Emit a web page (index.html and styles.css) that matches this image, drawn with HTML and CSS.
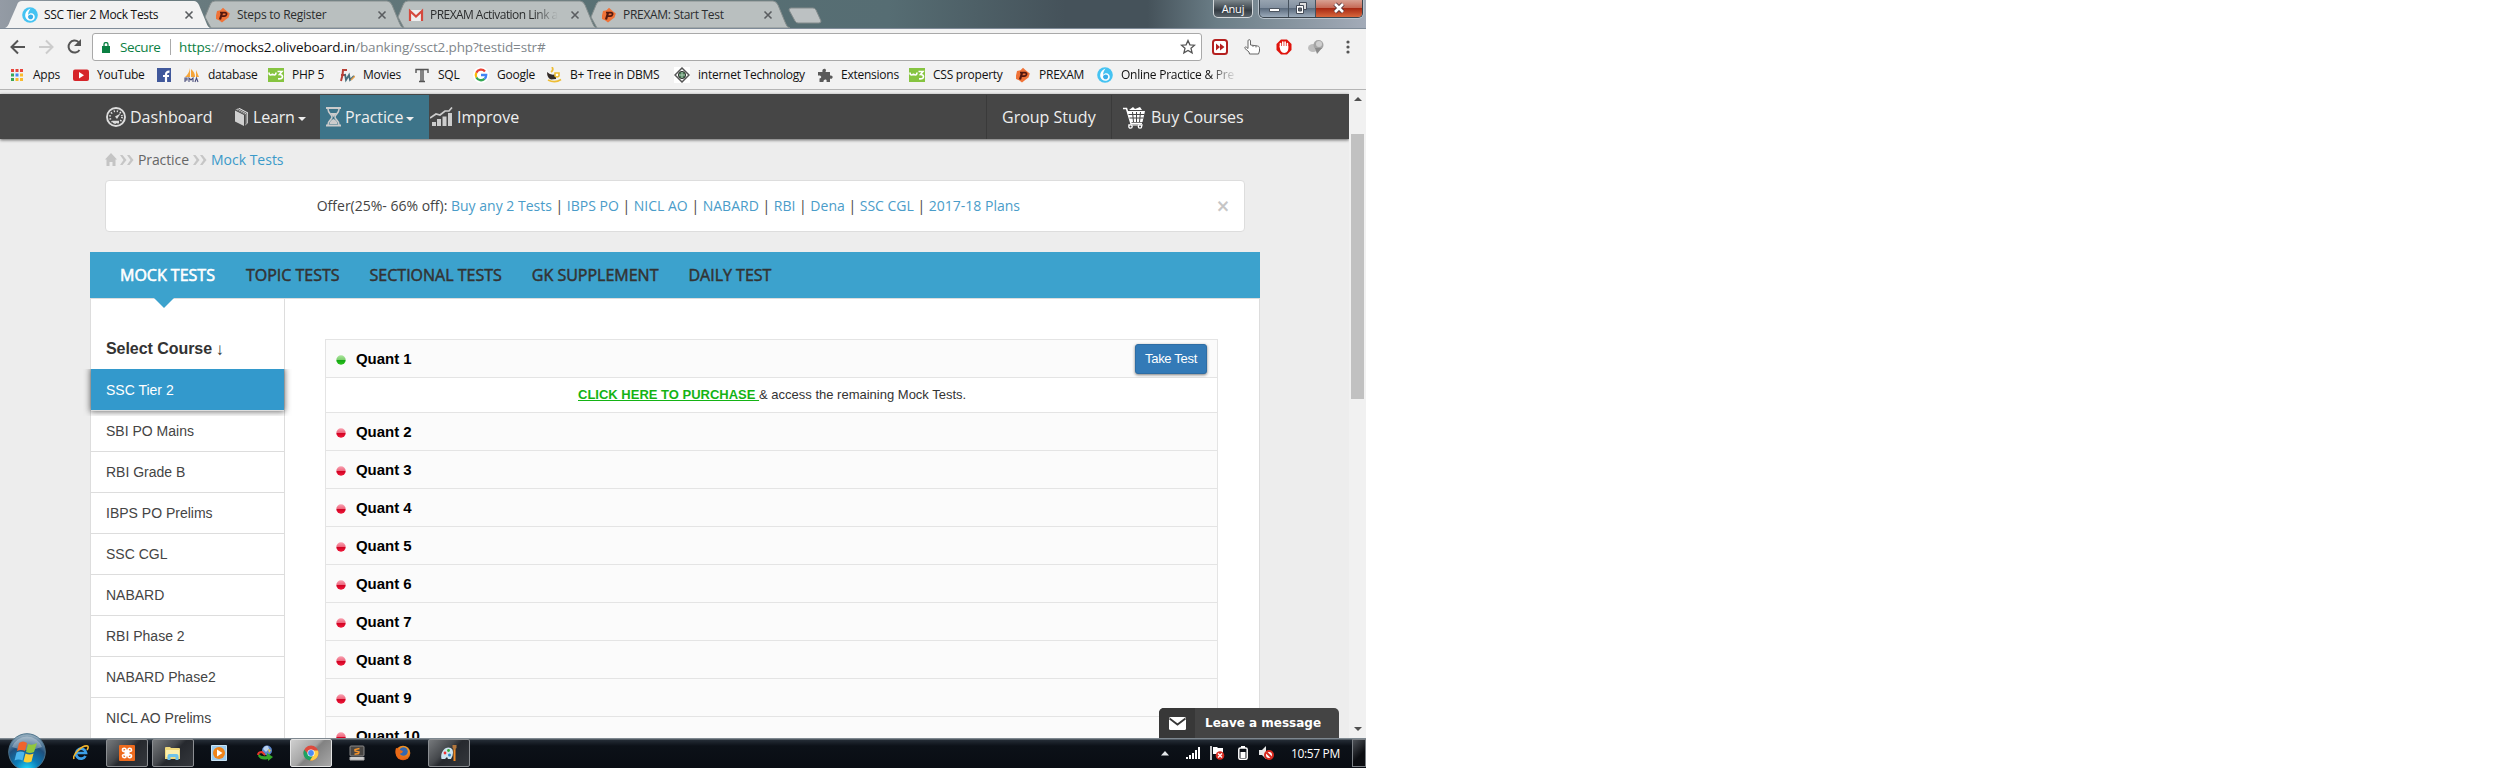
FILE: index.html
```html
<!DOCTYPE html>
<html lang="en">
<head>
<meta charset="utf-8">
<title>SSC Tier 2 Mock Tests</title>
<link rel="stylesheet" href="styles.css">
</head>
<body>
<svg class="defs" width="0" height="0">
  <defs>
    <linearGradient id="gGreen" x1="0" y1="0" x2="0" y2="1"><stop offset="0" stop-color="#a9e69c"/><stop offset=".45" stop-color="#7fd070"/><stop offset=".5" stop-color="#14a414"/><stop offset="1" stop-color="#2cc41c"/></linearGradient>
    <linearGradient id="gRed" x1="0" y1="0" x2="0" y2="1"><stop offset="0" stop-color="#f9a0b0"/><stop offset=".45" stop-color="#ee6a80"/><stop offset=".5" stop-color="#cf0020"/><stop offset="1" stop-color="#f01a3c"/></linearGradient>
    <radialGradient id="gOrb" cx=".5" cy="1" r=".95"><stop offset="0" stop-color="#25e0ff"/><stop offset=".35" stop-color="#0b7cb8"/><stop offset=".7" stop-color="#1f4f7c"/><stop offset="1" stop-color="#8fa9bb"/></radialGradient>
    <radialGradient id="gFox" cx=".6" cy=".3" r=".8"><stop offset="0" stop-color="#ffb52a"/><stop offset="1" stop-color="#d8480c"/></radialGradient>
  </defs>
  <symbol id="olive" viewBox="0 0 16 16"><circle cx="8" cy="8" r="7.800" fill="#45c3f2"/><path d="M8.500 1.500C4.500 3 2.600 6.500 3.400 10c.8 3 4 4.300 6.800 3.400 2.600-1 3.400-4 1.600-6-1.600-1.600-4.200-1.300-5.700.6C6 5.500 7.200 3.500 8.500 1.500z" fill="#fff"/><path d="M6 9.500c.5-2 3-2.800 4.500-1.400 1.300 1.400.6 3.500-1 4.100C7.700 12.800 6 11.500 6 9.500z" fill="#3aaee8"/></symbol>
  <symbol id="prexam" viewBox="0 0 16 16"><path d="M8 .8l3 2.700 3.800 3-1.300 4-3 2.200L7 15.500l-3-2.200L1 12V8.500L2 4l3.500-.7z" fill="#f07338"/><path d="M5 12.500L7 6" fill="none" stroke="#54190f" stroke-width="2.200"/><path d="M5 5.600h5.200q1.800.4 1.300 2t-2.300 1.600H6.500" fill="none" stroke="#54190f" stroke-width="1.700"/></symbol>
  <symbol id="w3" viewBox="0 0 16 16"><path d="M0 1h16v14H0z" fill="#86c440"/><path d="M1 5.500q0 2.500 1.700 2.500T4.500 6.500Q4.700 8 6.300 8T8 5.500M9.500 4.500h4.500l-2.500 3q3 0 3 2.300t-4.500 2" fill="none" stroke="#fff" stroke-width="1.600"/></symbol>
  <symbol id="x" viewBox="0 0 10 10"><path d="M1.500 1.500l7 7m0-7l-7 7" stroke="#5a5d60" stroke-width="1.600"/></symbol>
  <symbol id="chev" viewBox="0 0 14 10"><path d="M0 0h2.500l4 5-4 5H0l3.500-5zM7 0h2.500l4 5-4 5H7l3.500-5z" fill="#c6c6c6"/></symbol>
</svg>
<div class="screen">
  <header class="titlebar">
    <div class="tabs">
      <div class="tab tab-on"><svg class="shape" viewBox="0 0 206 28"><path d="M0 28Q3 27 5 21L12 5Q13 1 17 1H189Q192 1 194 5L201 22Q203 28 206 28z" fill="#f2f2f2"/></svg><svg class="fav"><use href="#olive"/></svg><span class="t1">SSC Tier 2 Mock Tests</span><svg class="close"><use href="#x"/></svg></div>
      <div class="tab"><svg class="shape" viewBox="0 0 206 28"><path d="M7 17L12 5Q13 1 17 1H189Q192 1 194 5L201 22Q203 28 206 28H13z" fill="#b9bfbf" stroke="#868e8e"/></svg><svg class="fav"><use href="#prexam"/></svg><span class="t2">Steps to Register</span><svg class="close"><use href="#x"/></svg></div>
      <div class="tab"><svg class="shape" viewBox="0 0 206 28"><path d="M7 17L12 5Q13 1 17 1H189Q192 1 194 5L201 22Q203 28 206 28H13z" fill="#b9bfbf" stroke="#868e8e"/></svg><svg class="fav" viewBox="0 0 16 16"><path d="M1 3h14v11H1z" fill="#eee"/><path d="M2 14V4l6 5.500L14 4v10" fill="none" stroke="#d5493d" stroke-width="2.200"/></svg><span class="t3">PREXAM Activation Link a</span><svg class="close"><use href="#x"/></svg></div>
      <div class="tab"><svg class="shape" viewBox="0 0 206 28"><path d="M7 17L12 5Q13 1 17 1H189Q192 1 194 5L201 22Q203 28 206 28H13z" fill="#b9bfbf" stroke="#868e8e"/></svg><svg class="fav"><use href="#prexam"/></svg><span class="t4">PREXAM: Start Test</span><svg class="close"><use href="#x"/></svg></div>
    </div>
    <svg class="newtab" viewBox="0 0 34 17"><path d="M3 1H25Q27 1 28 3L33 14Q33 16 31 16H10Q8 16 7 14L1 3Q1 1 3 1z" fill="#bcc1c2" stroke="#838b8c"/></svg>
    <div class="user">Anuj</div>
    <div class="winctl">
      <div class="wc wmin"><svg viewBox="0 0 28 18"><path d="M9.500 8.500h10v3h-10z" fill="#fff" stroke="#4c5560"/></svg></div>
      <div class="wc wmax"><svg viewBox="0 0 26 18"><path d="M10.500 2.500h7v7h-7z" fill="#ddd" stroke="#444c58"/><path d="M7.500 5.500h7v8h-7z" fill="#fff" stroke="#444c58"/><path d="M9.500 8h3v3h-3z" fill="#666" stroke="#444c58"/></svg></div>
      <div class="wc wcls"><svg viewBox="0 0 46 18"><path d="M19 4l8 8m0-8l-8 8" stroke="#54343a" stroke-width="4.500"/><path d="M19 4l8 8m0-8l-8 8" stroke="#fff" stroke-width="2.600"/></svg></div>
    </div>
  </header>
  <div class="toolbar">
    <svg class="navbtns" viewBox="0 0 92 32"><g fill="none" stroke-width="2"><path d="M25 18H12m6-6.500L11.500 18l6.500 6.500" stroke="#555"/><path d="M39 18h13m-6-6.500l6.500 6.500-6.500 6.500" stroke="#ccc"/><path d="M79.500 21a6 6 0 1 1-1-8" stroke="#555"/></g><path d="M81 10v7h-7z" fill="#555"/></svg>
    <div class="omnibox">
      <svg class="lock" viewBox="0 0 8 11"><path d="M0 4h8v7H0z" fill="#0b8043"/><path d="M2 5V2.500a2 2 0 0 1 4 0V5" fill="none" stroke="#0b8043" stroke-width="1.300"/></svg>
      <span class="secure">Secure</span><i class="vsep"></i><span class="url"><b>https</b>://<em>mocks2.oliveboard.in</em>/banking/ssct2.php?testid=str#</span>
      <svg class="star" viewBox="0 0 16 16"><path d="M8 1.500l1.900 4.300 4.700.4-3.600 3.100 1.100 4.600L8 11.500l-4.100 2.400L5 9.300 1.400 6.200l4.700-.4z" fill="none" stroke="#555" stroke-width="1.300"/></svg>
    </div>
    <div class="exts">
      <svg viewBox="0 0 16 16"><rect x="1" y="1" width="14" height="14" rx="2.500" fill="#fff" stroke="#b5201f" stroke-width="2"/><path d="M4 4.500L8 8l-4 3.500zM8 4.500L12.500 8 8 11.500z" fill="#b5201f"/></svg>
      <svg viewBox="0 0 16 16"><path d="M5.500 15L5 13 1 9.500c-1-1.500.8-2 1.800-1l1.200 1V1.800C4 .3 6.500.3 6.500 1.800V6l7 1c1.500.3 2 1 2 2.500V12l-1 3z" fill="#fff" stroke="#666"/><path d="M9 6v2m3-1.500v2" stroke="#777"/></svg>
      <svg viewBox="0 0 16 16"><path d="M5 .5h6L15.500 5v6L11 15.500H5L.5 11V5z" fill="#e0140c"/><path d="M4.500 8V4.500m2.300 4V3m2.300 5.500V3m2.300 5V4.500" stroke="#fff" stroke-width="1.600" stroke-linecap="round"/><path d="M3.700 7h8.500c.8 4-1 7-4 7s-4.500-3-4.500-7z" fill="#fff"/></svg>
      <svg viewBox="0 0 16 16"><ellipse cx="5" cy="9" rx="5" ry="4" fill="#bdbdbd"/><circle cx="10.500" cy="6" r="5" fill="#a4a4a4"/><path d="M7 9l2 6 5-6z" fill="#8a8a8a"/><circle cx="11" cy="5" r="3" fill="#cfcfcf"/></svg>
      <svg viewBox="0 0 16 16" fill="#555"><circle cx="8" cy="3" r="1.600"/><circle cx="8" cy="8" r="1.600"/><circle cx="8" cy="13" r="1.600"/></svg>
    </div>
  </div>
  <div class="bookmarks">
    <div class="bm b0"><svg viewBox="0 0 16 16"><path d="M2 2h3v3H2zM6.500 2h3v3h-3zM11 2h3v3h-3z" fill="#e8453c"/><path d="M2 6.500h3v3H2z" fill="#3aa757"/><path d="M6.500 6.500h3v3h-3z" fill="#4688f1"/><path d="M11 6.500h3v3h-3zM6.500 11h3v3h-3zM11 11h3v3h-3z" fill="#f9bb2d"/><path d="M2 11h3v3H2z" fill="#3aa757"/></svg><span>Apps</span></div>
    <div class="bm b1"><svg viewBox="0 0 16 16"><rect y="2.500" width="16" height="11.500" rx="2" fill="#d6252a"/><path d="M6 5l5 3.200-5 3.200z" fill="#fff"/></svg><span>YouTube</span></div>
    <div class="bm b2"><svg viewBox="0 0 16 16"><path d="M1 1h14v14H1z" fill="#40589b"/><path d="M10 15V7.500Q10 4.500 13.500 4.700M7 9h6" fill="none" stroke="#fff" stroke-width="2.200"/></svg></div>
    <div class="bm b3"><svg viewBox="0 0 16 16"><path d="M1 10Q5 7 6 1v9zM7 10V2q4 3 4 8zM12 10V3l3 7z" fill="#f5a53a"/><path d="M1 15v-4h2v2H1m4 2v-4l2 2 2-2v4m2 0l1.500-4L14 15" fill="none" stroke="#4a4d7c" stroke-width="1.100"/></svg><span>database</span></div>
    <div class="bm b4"><svg><use href="#w3"/></svg><span>PHP 5</span></div>
    <div class="bm b5"><svg viewBox="0 0 16 16"><path d="M2 14Q4 8 4 3h4M2 8h5" fill="none" stroke="#b84036" stroke-width="2"/><path d="M6 7l1 6 3-5 1 5 4-4" fill="none" stroke="#476f7c" stroke-width="1.800"/><path d="M12 13l4-4" stroke="#e8a04a" stroke-width="1.500"/></svg><span>Movies</span></div>
    <div class="bm b6"><svg viewBox="0 0 16 16"><path d="M2 6V2.500h12V6M7 2v12M9 2v12M5 14.500h6" fill="none" stroke="#555" stroke-width="1.400"/></svg><span>SQL</span></div>
    <div class="bm b7"><svg viewBox="0 0 16 16"><circle cx="8" cy="8" r="8" fill="#fff"/><g fill="none" stroke-width="2.300"><path d="M12 4.500A5.200 5.200 0 0 0 3.300 5.700" stroke="#ea4335"/><path d="M3.300 5.700a5.200 5.200 0 0 0 .1 4.800" stroke="#fbbc05"/><path d="M3.400 10.500a5.200 5.200 0 0 0 8.100 1.400" stroke="#34a853"/><path d="M8 8h5.200q0 2.500-1.700 3.900" stroke="#4285f4"/></g></svg><span>Google</span></div>
    <div class="bm b8"><svg viewBox="0 0 16 16"><path d="M1 5q0 6 4 7.500l5-.5V7q-5 2-9-2z" fill="#332b28"/><path d="M9 6h4v3q-2 2-4 0z" fill="#fff" stroke="#eebd34" stroke-width="1.600"/><path d="M2 13q7 3.500 13-.5M5 5q3-2 1-5" fill="none" stroke="#eebd34" stroke-width="1.800"/></svg><span>B+ Tree in DBMS</span></div>
    <div class="bm b9"><svg viewBox="0 0 16 16"><path d="M0 0h16v16H0z" fill="#fff"/><path d="M8 1l7 7-7 7-7-7z" fill="none" stroke="#555" stroke-width="1.500"/><circle cx="8" cy="8" r="3.600" fill="#497c55" stroke="#333"/><path d="M5 8h6M8 5v6" stroke="#b3d0ba"/></svg><span>internet Technology</span></div>
    <div class="bm b10"><svg viewBox="0 0 16 16"><path d="M1 5h4.500C4.500 1.500 9 .5 9 3.500L8.500 5H13v3.500c4-1 3 4.500 0 3V15H9.500c1-3.500-3.500-3-3 0H2.500v-3.500C5 11 5 8 1 8.500z" fill="#5a5a5a"/></svg><span>Extensions</span></div>
    <div class="bm b11"><svg><use href="#w3"/></svg><span>CSS property</span></div>
    <div class="bm b12"><svg><use href="#prexam"/></svg><span>PREXAM</span></div>
    <div class="bm b13"><svg><use href="#olive"/></svg><span>Online Practice &amp; Pre</span></div>
  </div>
  <div class="viewport">
    <main class="page">
      <nav class="navbar">
        <a class="n-dash"><svg width="20" height="20" viewBox="0 0 20 20"><circle cx="10" cy="10" r="9" fill="none" stroke="#ddd" stroke-width="1.900"/><circle cx="10" cy="10" r="6" fill="none" stroke="#ddd" stroke-width="1.800" stroke-dasharray="1.300 1.850"/><path d="M14.500 6.500L9 9.500l2 2.500z" fill="#ddd"/><path d="M7 15h6" stroke="#ddd" stroke-width="2.500"/></svg><span>Dashboard</span></a>
        <a class="n-learn"><svg width="16" height="20" viewBox="0 0 16 20"><path d="M1 3.500l9 4.500v11l-9-4.500z" fill="#cfcfcf"/><path d="M1.500 2.500L5.500 1l8.500 4.500v10.500l-3 2.500V7.500z" fill="#e8e8e8"/><path d="M2.500 2.500l9 4.700v10.500M4 1.800l8.800 4.500v10.500" fill="none" stroke="#444" stroke-width=".8"/></svg><span>Learn</span><i class="caret"></i></a>
        <a class="n-prac"><svg width="15" height="20" viewBox="0 0 15 20"><path d="M0 1h15M0 18.500h15" stroke="#ccc" stroke-width="2"/><path d="M2 2c0 5 4 5 4 8s-4 3-4 8M13 2c0 5-4 5-4 8s4 3 4 8" fill="none" stroke="#ccc" stroke-width="1.500"/><path d="M4 6h7l-3.500 4zM3.500 17q0-3 4-5 4 2 4 5z" fill="#ccc"/></svg><span>Practice</span><i class="caret"></i></a>
        <a class="n-impr"><svg width="23" height="20" viewBox="0 0 23 20"><path d="M2 15h4v4H2zM7 12h4v7H7zM12.500 9.500h4v9.500h-4zM18 6h4v13h-4z" fill="#ccc"/><path d="M0 11l6-4 4 1 5-4 4 0 3-3.500" fill="none" stroke="#ccc" stroke-width="1.700"/></svg><span>Improve</span></a>
        <a class="n-group"><span>Group Study</span></a>
        <a class="n-buy"><svg width="24" height="23" viewBox="0 0 24 23"><path d="M1 2.500h3.500L9 17.500h11" fill="none" stroke="#fff" stroke-width="1.600"/><path d="M5 5h18l-2.500 11H8.500z" fill="#fff"/><path d="M6.500 8.500h16M7.500 12h14M10.500 6l1 10M14.500 6v10M18.500 6l-1 10" stroke="#464646" stroke-width="1"/><path d="M7 4l4-3 2 2 5-2 2 3z" fill="#fff"/><path d="M6 19h15" stroke="#fff"/><circle cx="8.500" cy="20.500" r="1.700" fill="#464646" stroke="#fff" stroke-width="1.300"/><circle cx="18" cy="20.500" r="1.700" fill="#464646" stroke="#fff" stroke-width="1.300"/></svg><span>Buy Courses</span></a>
      </nav>
      <div class="container">
        <div class="crumbs"><svg width="12" height="13" viewBox="0 0 12 13"><path d="M6 0l6 6.500h-1.500V13h-3V9h-3v4h-3V6.500H0z" fill="#c4c4c4"/></svg><svg class="cv" width="14" height="10"><use href="#chev"/></svg><span class="c1">Practice</span><svg class="cv" width="14" height="10"><use href="#chev"/></svg><span class="c2">Mock Tests</span></div>
        <div class="offer"><p>Offer(25%- 66% off): <a>Buy any 2 Tests</a> | <a>IBPS PO</a> | <a>NICL AO</a> | <a>NABARD</a> | <a>RBI</a> | <a>Dena</a> | <a>SSC CGL</a> | <a>2017-18 Plans</a></p><span class="x">×</span></div>
        <div class="cats"><span class="on">MOCK TESTS</span><span>TOPIC TESTS</span><span>SECTIONAL TESTS</span><span>GK SUPPLEMENT</span><span>DAILY TEST</span></div>
        <div class="panel">
          <aside class="side">
            <h3>Select Course <span class="dn">↓</span></h3>
            <ul><li class="sel">SSC Tier 2</li><li>SBI PO Mains</li><li>RBI Grade B</li><li>IBPS PO Prelims</li><li>SSC CGL</li><li>NABARD</li><li>RBI Phase 2</li><li>NABARD Phase2</li><li>NICL AO Prelims</li></ul>
          </aside>
          <section class="tests">
            <div class="row"><svg class="dot" viewBox="0 0 10 10"><circle cx="5" cy="5" r="4.700" fill="url(#gGreen)"/></svg><b>Quant 1</b><button class="take">Take Test</button></div>
            <div class="buy"><a>CLICK HERE TO PURCHASE </a><span>&amp; access the remaining Mock Tests.</span></div>
            <div class="row"><svg class="dot" viewBox="0 0 10 10"><circle cx="5" cy="5" r="4.700" fill="url(#gRed)"/></svg><b>Quant 2</b></div>
            <div class="row"><svg class="dot" viewBox="0 0 10 10"><circle cx="5" cy="5" r="4.700" fill="url(#gRed)"/></svg><b>Quant 3</b></div>
            <div class="row"><svg class="dot" viewBox="0 0 10 10"><circle cx="5" cy="5" r="4.700" fill="url(#gRed)"/></svg><b>Quant 4</b></div>
            <div class="row"><svg class="dot" viewBox="0 0 10 10"><circle cx="5" cy="5" r="4.700" fill="url(#gRed)"/></svg><b>Quant 5</b></div>
            <div class="row"><svg class="dot" viewBox="0 0 10 10"><circle cx="5" cy="5" r="4.700" fill="url(#gRed)"/></svg><b>Quant 6</b></div>
            <div class="row"><svg class="dot" viewBox="0 0 10 10"><circle cx="5" cy="5" r="4.700" fill="url(#gRed)"/></svg><b>Quant 7</b></div>
            <div class="row"><svg class="dot" viewBox="0 0 10 10"><circle cx="5" cy="5" r="4.700" fill="url(#gRed)"/></svg><b>Quant 8</b></div>
            <div class="row"><svg class="dot" viewBox="0 0 10 10"><circle cx="5" cy="5" r="4.700" fill="url(#gRed)"/></svg><b>Quant 9</b></div>
            <div class="row"><svg class="dot" viewBox="0 0 10 10"><circle cx="5" cy="5" r="4.700" fill="url(#gRed)"/></svg><b>Quant 10</b></div>
          </section>
        </div>
      </div>
      <div class="chat"><div class="mail"><svg width="17" height="13" viewBox="0 0 17 13"><rect width="17" height="13" rx="1.500" fill="#fff"/><path d="M.5 1.500l8 6 8-6" fill="none" stroke="#383838" stroke-width="1.800"/></svg></div><span>Leave a message</span></div>
    </main>
    <div class="scroll"><i class="up"></i><i class="thumb"></i><i class="down"></i></div>
  </div>
  <footer class="taskbar">
    <svg class="orb" viewBox="0 0 38 38"><circle cx="19" cy="19" r="18.300" fill="url(#gOrb)" stroke="#4e748c"/><path d="M4 14A16 16 0 0 1 34 14Q19 20 4 14z" fill="#fff" opacity=".3"/><path d="M11 10q4-3 8 0l-2 8q-4-2-8 0z" fill="#f0642c"/><path d="M20 11q4 2 9-1l-3 9q-4 2-8 0z" fill="#91c73e"/><path d="M8.500 19.500q4-2 8 0l-2 8q-4-2-8 0z" fill="#4cb5ed"/><path d="M17.500 20.500q4 2 8 0l-2 8q-4 2-8 0z" fill="#fbcf35"/></svg>
    <div class="tasks">
      <div class="task"><svg viewBox="0 0 16 16"><path d="M12.500 11A5 5 0 1 1 13 8H4" fill="none" stroke="#3c9fe8" stroke-width="2.700"/><path d="M1 14C-1 10 9 0 14.500 1q1.500 1-.5 4" fill="none" stroke="#f2b52c" stroke-width="1.600"/></svg></div>
      <div class="task open"><svg viewBox="0 0 16 16"><rect width="16" height="16" rx="1" fill="#ee6b1e"/><path d="M5.500 5h5v6h-5z" fill="#fff"/><path d="M8 6.500H5.500q-2 0-2-1.600T5.300 3.300 7 5v6q0 1.700-1.700 1.700T3.500 11t2-1.500h5q2 0 2 1.600t-1.800 1.600T9 11V5q0-1.700 1.700-1.700T12.500 5t-2 1.500H8" fill="none" stroke="#fff" stroke-width="1.600"/></svg></div>
      <div class="task open"><svg viewBox="0 0 16 16"><path d="M0 3q0-1 1-1h4l1 1h8q1 0 1 1v10H0z" fill="#f1da7c"/><path d="M1 5h13v7H1z" fill="#fbefae"/><path d="M2.500 15V11q0-2 2-2h7q2 0 2 2v4h-3v-3h-5v3z" fill="#6ec3ea"/></svg></div>
      <div class="task"><svg viewBox="0 0 16 16"><path d="M.5.500h15v15H.5z" fill="#9dcbed" stroke="#c9e4f5"/><circle cx="8" cy="8" r="6" fill="#f08418"/><path d="M6 4.500l5.500 3.500L6 11.500z" fill="#fff"/></svg></div>
      <div class="task"><svg viewBox="0 0 16 16"><circle cx="10" cy="5.500" r="5" fill="#5c86cc"/><path d="M6 4q2-4 5-3l1 3-3 3z" fill="#bcd3ef"/><path d="M2 9q2 3 8 2V8l6 4-5 4v-2Q4 16 1 11z" fill="#35a82a"/><path d="M1 10q0-3 4-3l3 3" stroke="#e8382a" stroke-width="1.800" fill="none"/><path d="M11 4l3 1-2 3z" fill="#e7c84a"/></svg></div>
      <div class="task open lit"><svg viewBox="0 0 16 16"><circle cx="8" cy="8" r="7.500" fill="#dd4b3e"/><path d="M1.200 4.800A7.500 7.500 0 0 0 7 15.500L11 9 5 9z" fill="#1da362"/><path d="M15 5.500H8L11 9l-4 6.500A7.500 7.500 0 0 0 15 5.500z" fill="#ffce44"/><circle cx="8" cy="8" r="3.600" fill="#fff"/><circle cx="8" cy="8" r="2.900" fill="#4c8bf5"/></svg></div>
      <div class="task"><svg viewBox="0 0 16 16"><rect x="1" y="1" width="14" height="10" rx="1" fill="#484644" stroke="#888"/><path d="M1 12v3h14v-3" fill="#ccc" stroke="#aaa"/><path d="M10.500 3.500L6 4.500v1.500l4 1-.5 1.500-4 .8" fill="none" stroke="#f3932b" stroke-width="1.500"/></svg></div>
      <div class="task"><svg viewBox="0 0 16 16"><circle cx="8" cy="8" r="7.300" fill="url(#gFox)"/><circle cx="8.500" cy="6.500" r="4.300" fill="#3467b0"/><path d="M1 3q2 0 4 2l3 1-1 2-3 1q2 4 7 2-3 5-8 2Q-1 9 1 3z" fill="#ea6a17"/></svg></div>
      <div class="task open"><svg viewBox="0 0 16 16"><path d="M4 3.500q5-2.500 7.500 1 1.500 5-1.500 9.500H7l-1-2-2 2H.5q-1.500-6 3.500-10.500z" fill="#cde4ef"/><circle cx="4" cy="8" r="1.400" fill="#e33"/><circle cx="7.500" cy="5.500" r="1.400" fill="#3a3"/><circle cx="8.500" cy="10" r="1.500" fill="#38c"/><path d="M13.500 4v12" stroke="#f08a24" stroke-width="2"/><path d="M11.500 0h4v3l-2 2-2-2z" fill="#b3783e"/></svg></div>
    </div>
    <div class="tray">
      <svg class="tr1" width="8" height="5" viewBox="0 0 8 5"><path d="M4 0l4 4.500H0z" fill="#e5e9ec"/></svg>
      <svg class="tr2" width="15" height="12" viewBox="0 0 15 12"><path d="M0 10h2v2H0zM3 8h2v4H3zM6 6h2v6H6zM9 3h2v9H9zM12 0h2v12h-2z" fill="#fff"/></svg>
      <svg class="tr3" width="15" height="14" viewBox="0 0 15 14"><path d="M1 0v14" stroke="#fff" stroke-width="1.500"/><path d="M3 1h4l1 1h5v6H3z" fill="#fff"/><circle cx="10" cy="9.500" r="4.300" fill="#d92a20"/><path d="M8 7.500l4 4m0-4l-4 4" stroke="#fff" stroke-width="1.400"/></svg>
      <svg class="tr4" width="10" height="14" viewBox="0 0 10 14"><path d="M3 0h4v2H3z" fill="#fff"/><rect x=".8" y="2" width="8.400" height="11.300" rx="1.500" fill="none" stroke="#fff" stroke-width="1.500"/><path d="M2.500 6h5v6h-5z" fill="#fff"/></svg>
      <svg class="tr5" width="15" height="14" viewBox="0 0 15 14"><path d="M0 4h3l4-4v13L3 9H0z" fill="#e8e8e8"/><circle cx="10" cy="9" r="4" fill="#fff" stroke="#d92a20" stroke-width="2"/><path d="M7.500 6.500l5 5" stroke="#d92a20" stroke-width="2"/></svg>
      <span class="clock">10:57 PM</span><i class="peek"></i>
    </div>
  </footer>
</div>
</body>
</html>
```

FILE: styles.css
```css
* { box-sizing: border-box; }
body { margin: 0; background: #fff; font-family: "Open Sans", sans-serif; }
.defs { position: absolute; }
svg { display: block; flex: none; }
i, em { font-style: normal; }
span { white-space: nowrap; }
.screen { width: 1366px; height: 768px; display: flex; flex-direction: column; overflow: hidden; }

/* window title bar */
.titlebar { height: 29px; flex: none; display: flex; padding-left: 5px; border-bottom: 1px solid #7f8b98; background: linear-gradient(90deg, #949ba5 0, #6b7c80 10%, #587073 45%, #566d73 65%, #45525a 78%, #45525a 84%, #6a7d86 89%, #a3abb8 100%); }
.tabs { display: flex; width: 783px; }
.tab { position: relative; width: 206px; margin-right: -13px; height: 28px; display: flex; align-items: center; padding: 2px 18px 0 17px; font-size: 12px; color: #2b2d2e; }
.tab-on { z-index: 1; color: #111; }
.shape { position: absolute; left: 0; top: 0; width: 206px; height: 28px; }
.fav { position: relative; width: 16px; height: 16px; margin-right: 6px; }
.close { position: relative; width: 10px; height: 10px; margin-left: auto; margin-right: -1px; }
.tab span { position: relative; line-height: 16px; letter-spacing: -.3px; }
.tab .t2 { letter-spacing: -.25px; }
.tab .t3 { width: 129px; letter-spacing: -.55px; -webkit-mask-image: linear-gradient(90deg, #000 104px, transparent 128px); mask-image: linear-gradient(90deg, #000 104px, transparent 128px); }
.newtab { width: 34px; height: 17px; margin: 7px 0 0; }
.user { margin: 0 6px 0 auto; width: 40px; height: 18px; border: 1px solid #d4d9dc; border-top: 0; border-radius: 0 0 5px 5px; background: linear-gradient(#7d878c, #343c43 60%, #5a646b); color: #fff; font-size: 11px; line-height: 17px; text-align: center; letter-spacing: -.2px; }
.winctl { display: flex; width: 104px; margin-right: 3px; height: 18px; border: 1px solid #3a444d; border-top: 0; border-radius: 0 0 5px 5px; overflow: hidden; box-shadow: 0 0 0 1px #b9c3cc; }
.wc { background: linear-gradient(#98a4b0, #8290a0 45%, #5c6c7e 50%, #9cabbb); border-right: 1px solid #46525e; }
.wc svg { height: 18px; width: 100%; }
.wmin { width: 29px; }
.wmax { width: 27px; }
.wcls { flex: 1; border: 0; background: linear-gradient(#d8a193, #c66b58 45%, #a82a14 50%, #d8673c); }

/* toolbar */
.toolbar { height: 32px; flex: none; background: #f2f2f2; display: flex; }
.navbtns { width: 92px; height: 32px; }
.omnibox { width: 1110px; height: 28px; margin-top: 4px; border: 1px solid #a9a9a9; border-radius: 3px; background: #fff; display: flex; align-items: center; padding-left: 9px; font-size: 13.500px; }
.lock { width: 8px; height: 11px; margin-right: 10px; }
.secure { color: #0b8043; letter-spacing: -.4px; width: 50px; }
.vsep { width: 1px; height: 16px; background: #aaa; margin-right: 8px; }
.url { color: #80868b; letter-spacing: -.14px; }
.url b { font-weight: 400; color: #0b8043; }
.url em { color: #111; }
.star { width: 16px; height: 16px; margin-left: auto; margin-right: 5px; }
.exts { display: flex; gap: 16px; padding: 10px 0 0 10px; }
.exts svg { width: 16px; height: 16px; }

/* bookmarks */
.bookmarks { height: 29px; flex: none; background: #f2f2f2; border-bottom: 1px solid #b5b5b5; display: flex; padding: 0 0 1px 9px; font-size: 12px; color: #111; }
.bm { display: flex; align-items: center; gap: 8px; }
.bm svg { width: 16px; height: 16px; }
.bm span { letter-spacing: -.25px; }
.b0 { width: 64px; } .b1 { width: 83px; } .b2 { width: 28px; } .b3 { width: 84px; } .b4 { width: 71px; }
.b5 { width: 75px; } .b6 { width: 59px; } .b7 { width: 73px; } .b8 { width: 128px; } .b9 { width: 143px; }
.b10 { width: 92px; } .b11 { width: 106px; } .b12 { width: 82px; }
.b13 span { -webkit-mask-image: linear-gradient(90deg, #000 88px, transparent 116px); mask-image: linear-gradient(90deg, #000 88px, transparent 116px); }

/* web page */
.viewport { height: 648px; flex: none; display: flex; }
.page { position: relative; width: 1349px; height: 648px; overflow: hidden; background: #ededed; padding-top: 4px; }
.navbar { height: 45px; background: #464646; display: flex; color: #eee; font-size: 16px; padding-left: 97px; padding-top: 1px; box-shadow: 0 1px 3px rgba(0,0,0,.6); }
.navbar a { display: flex; align-items: center; height: 44px; padding-left: 9px; }
.navbar svg { margin-right: 4px; }
.n-dash { width: 128px; }
.n-learn { width: 95px; }
.navbar .n-learn svg { margin-right: 3px; }
.n-learn span { letter-spacing: -.2px; }
.navbar .n-prac { width: 109px; background: #3d7489; padding-left: 6px; }
.n-prac span { letter-spacing: -.1px; }
.navbar .n-impr { padding-left: 1px; }
.caret { border: 4px solid transparent; border-top-color: #eee; border-bottom: 0; margin: 3px 0 0 3px; }
.navbar .n-group { margin-left: auto; width: 125px; border-left: 1px solid #3a3a3a; padding-left: 15px; }
.navbar .n-buy { width: 238px; border-left: 1px solid #3a3a3a; padding-left: 10px; }
.navbar .n-buy svg { margin-right: 5px; }
.container { width: 1170px; margin-left: 90px; }
.crumbs { height: 41px; padding: 0 0 1px 15px; display: flex; align-items: center; font-size: 14px; color: #666; }
.cv { margin: 2px 0 0 3px; }
.c1 { margin-left: 4px; margin-right: 1px; letter-spacing: -.1px; }
.c2 { margin-left: 4px; color: #3b9ac9; }
.offer { width: 1140px; height: 52px; margin-left: 15px; background: #fff; border: 1px solid #ddd; border-radius: 4px; display: flex; align-items: center; justify-content: flex-end; font-size: 14px; color: #444; }
.offer p { margin: -1px 197px 0 0; white-space: nowrap; }
.offer a { color: #4a9cc9; }
.offer .x { font-size: 21px; line-height: 20px; color: #c4c4c4; margin-right: 15px; -webkit-text-stroke: .5px #c4c4c4; }
.cats { margin-top: 20px; height: 46px; background: #3ca2cd; display: flex; gap: 30px; padding-left: 30px; font-size: 16px; line-height: 46px; color: #333; -webkit-text-stroke: .5px #333; }
.cats .on { position: relative; color: #fff; -webkit-text-stroke: .6px #fff; margin-right: 1px; }
.cats .on::after { content: ""; position: absolute; z-index: 2; left: 34px; top: 46px; border: 10px solid transparent; border-top-color: #3ca2cd; border-bottom: 0; }
.panel { display: flex; height: 450px; background: #fff; border: 1px solid #ddd; font-family: "Liberation Sans", Arial, sans-serif; }
.side { width: 194px; border-right: 1px solid #ddd; }
.side h3 { margin: 0; height: 70px; padding: 40px 0 0 15px; font-size: 16px; line-height: 20px; color: #333; letter-spacing: -.05px; }
.side .dn { font-family: "Liberation Serif", serif; font-weight: 400; font-size: 17px; position: relative; top: 1px; left: -1px; }
.side ul { margin: 0; padding: 0; list-style: none; }
.side li { height: 41px; border-bottom: 1px solid #ddd; padding-left: 15px; font-size: 14px; line-height: 40px; color: #444; background: #fff; width: 193px; }
.side .sel { height: 42px; line-height: 42px; background: #3399cc; color: #fff; box-shadow: 0 0 6px 1px rgba(0,0,0,.55); clip-path: inset(0 -8px -5px -8px); }
.tests { width: 893px; margin: 40px 0 0 40px; border: 1px solid #e4e4e4; border-bottom: 0; }
.row { height: 38px; background: #fbfbfb; border-bottom: 1px solid #e4e4e4; display: flex; align-items: center; padding-left: 10px; font-size: 15px; color: #000; }
.row b { letter-spacing: -.05px; }
.dot { width: 10px; height: 10px; margin-right: 10px; margin-top: 2px; }
.take { margin: 0 10px 0 auto; width: 72px; height: 30px; padding: 0; background: #337ab7; border: 1px solid #2e6da4; border-radius: 3px; color: #fff; font: 13px "Liberation Sans", Arial, sans-serif; letter-spacing: -.3px; box-shadow: 0 1px 3px rgba(0,0,0,.5); }
.buy { height: 35px; border-bottom: 1px solid #e4e4e4; padding-left: 252px; font-size: 13px; line-height: 33px; color: #333; white-space: pre; display: flex; }
.buy a { color: #14b314; font-weight: 700; text-decoration: underline; }
.chat { position: absolute; left: 1159px; top: 618px; width: 180px; height: 30px; background: #444; border-radius: 5px 5px 0 0; overflow: hidden; display: flex; align-items: center; color: #fff; font: bold 12px "DejaVu Sans", Verdana, sans-serif; }
.mail { width: 36px; height: 30px; background: #383838; display: flex; align-items: center; justify-content: center; margin-right: 10px; }
.scroll { width: 17px; background: #f1f1f1; height: 648px; display: flex; flex-direction: column; align-items: center; }
.up { border: 4px solid transparent; border-bottom-color: #505050; border-top: 0; margin-top: 7px; }
.thumb { width: 13px; height: 265px; background: #c1c1c1; margin-top: 33px; }
.down { border: 4px solid transparent; border-top-color: #505050; border-bottom: 0; margin-top: auto; margin-bottom: 7px; }

/* taskbar */
.taskbar { position: relative; height: 30px; flex: none; background: linear-gradient(#7e8890 0 1px, #242c35 2px, #0c1118 8px, #090d13); display: flex; }
.orb { position: absolute; left: 8px; top: -5px; width: 38px; height: 38px; }
.tasks { display: flex; gap: 4px; padding: 1px 0 0 60px; }
.task { width: 42px; height: 28px; display: flex; align-items: center; justify-content: center; }
.task svg { width: 16px; height: 16px; }
.open { border: 1px solid #8b8e92; border-radius: 2px; background: linear-gradient(135deg, #76797c 0, #45484c 40%, #26292e 52%, #34373c 100%); }
.lit { border-color: #e4e4e4; background: linear-gradient(135deg, #cfcfcf 0, #a5a5a5 45%, #828282 52%, #a8a8a8 100%); }
.tray { margin-left: auto; display: flex; align-items: center; color: #fff; }
.tr1 { margin-right: 17px; } .tr2 { margin-right: 9px; } .tr3 { margin-right: 13px; } .tr4 { margin-right: 11px; } .tr5 { margin-right: 17px; }
.clock { font-size: 12px; letter-spacing: -.35px; width: 61px; }
.peek { width: 14px; height: 28px; border: 1px solid #7b8085; background: linear-gradient(135deg, #4c5056, #0c0e12 60%); }
```
